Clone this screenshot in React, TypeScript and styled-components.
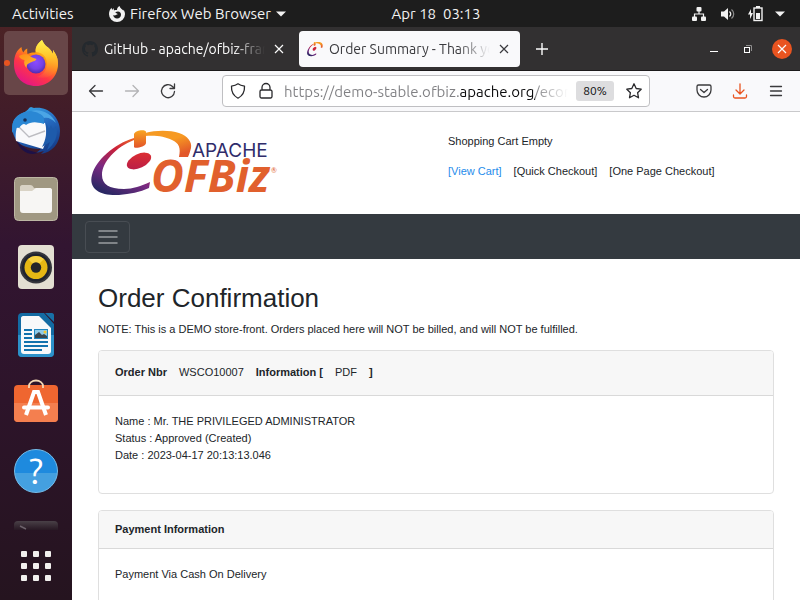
import React from "react";
import styled, { createGlobalStyle } from "styled-components";

const GlobalStyle = createGlobalStyle`
  * { box-sizing: border-box; }
  body { margin: 0; background: #fff; overflow: hidden; }
  button, input { font: inherit; color: inherit; }
  svg { display: block; flex: none; overflow: visible; }
`;

const UI_FONT = `Ubuntu, "Noto Sans", sans-serif`;
const PAGE_FONT = `"Liberation Sans", Arial, sans-serif`;

/* ---------- Desktop shell ---------- */

const Desktop = styled.div`
  display: flex;
  flex-direction: column;
  height: 100vh;
  font-family: ${UI_FONT};
  font-size: 15px;
`;

const TopBar = styled.header`
  display: grid;
  grid-template-columns: 72px 1fr auto 1fr;
  align-items: center;
  flex: none;
  height: 27px;
  line-height: 20px;
  background: #1d1d1d;
  color: #f2f2f2;
`;

const AppMenu = styled.div`
  padding-left: 37px;
`;

const StatusIcons = styled.div`
  display: flex;
  align-items: center;
  justify-content: flex-end;
  gap: 12px;
  padding-right: 15px;
`;

const BarButton = styled.button<{ $inset?: boolean }>`
  display: flex;
  align-items: center;
  gap: 5px;
  padding: 0 0 0 ${(p) => (p.$inset ? 12 : 0)}px;
  border: 0;
  background: none;
  white-space: pre;
`;

const Workspace = styled.div`
  display: flex;
  flex: 1;
  min-height: 0;
`;

const Dock = styled.nav`
  display: flex;
  flex-direction: column;
  flex: none;
  gap: 4px;
  width: 72px;
  padding: 4px;
  overflow: hidden;
  background: linear-gradient(180deg, #4b2225 0%, #3d1a2b 22%, #321531 38%, #2d142a 65%, #25141f 100%);
`;

const DockTile = styled.button<{ $active?: boolean; $partial?: boolean }>`
  position: relative;
  display: flex;
  justify-content: center;
  align-items: ${(p) => (p.$partial ? "flex-start" : "center")};
  flex: none;
  height: ${(p) => (p.$partial ? 23 : 64)}px;
  padding: ${(p) => (p.$partial ? "8px 0 0" : "0")};
  border: 0;
  border-radius: 5px;
  overflow: ${(p) => (p.$partial ? "hidden" : "visible")};
  background: ${(p) => (p.$active ? "#684648" : "none")};
`;

const RunningDot = styled.span`
  position: absolute;
  left: 0;
  top: 29px;
  width: 6px;
  height: 6px;
  border-radius: 50%;
  background: #e95420;
`;

/* ---------- Browser chrome ---------- */

const BrowserWindow = styled.section`
  display: flex;
  flex-direction: column;
  flex: 1;
  min-width: 0;
`;

const TabStrip = styled.div`
  display: flex;
  align-items: center;
  flex: none;
  height: 44px;
  padding: 0 8px 0 2px;
  background: #323031;
  border-bottom: 1px solid #1c1a1b;
  color: #fbfbfb;
  font-size: 14px;
`;

const Tab = styled.div<{ $active?: boolean }>`
  display: flex;
  align-items: center;
  gap: 6px;
  flex: 0 1 221px;
  min-width: 0;
  height: 36px;
  padding: 0 8px;
  border-radius: 4px;
  background: ${(p) => (p.$active ? "#f9f9fb" : "none")};
  color: ${(p) => (p.$active ? "#3a3a3e" : "#fbfbfb")};
  margin-right: 4px;
`;

const TabTitle = styled.span`
  flex: 1;
  min-width: 0;
  overflow: hidden;
  white-space: nowrap;
  mask-image: linear-gradient(to left, transparent 0, #000 32px);
`;

const IconButton = styled.button<{ $size?: number }>`
  display: flex;
  align-items: center;
  justify-content: center;
  flex: none;
  width: ${(p) => p.$size ?? 36}px;
  height: ${(p) => p.$size ?? 32}px;
  padding: 0;
  border: 0;
  background: none;
`;

const WindowControls = styled.div`
  display: flex;
  align-items: center;
  gap: 14px;
  margin-left: auto;
`;

const CloseWindow = styled(IconButton)`
  border-radius: 50%;
  background: #e95420;
`;

const Toolbar = styled.div`
  display: flex;
  align-items: center;
  flex: none;
  height: 41px;
  padding: 0 6px;
  background: #f9f9fb;
  border-bottom: 1px solid #c9c9cb;
  color: #3a3a3c;
`;

const AddressBar = styled.div`
  display: flex;
  align-items: center;
  gap: 12px;
  flex: 1;
  min-width: 0;
  height: 32px;
  margin: 0 36px;
  padding: 0 7px;
  background: #fff;
  border: 1px solid #bfbfc2;
  border-radius: 4px;
  color: #29292c;
`;

const UrlInput = styled.input`
  flex: 1;
  min-width: 0;
  margin-left: -2px;
  padding: 0;
  border: 0;
  outline: 0;
  color: transparent;
  background: linear-gradient(
    to right,
    #808083 0 176px,
    #0c0c0d 176px 251px,
    #808083 251px,
    transparent 284px
  );
  background-clip: text;
`;

const AddressEnd = styled.div`
  display: flex;
  align-items: center;
  gap: 12px;
  margin-left: -4px;
`;

const ZoomBadge = styled.button`
  width: 38px;
  height: 20px;
  padding: 0;
  border: 0;
  border-radius: 3px;
  background: #dddddf;
  color: #111;
  font-size: 12px;
  line-height: 20px;
`;

/* ---------- Store page ---------- */

const Page = styled.div`
  flex: 1;
  min-height: 0;
  overflow: hidden;
  background: #fff;
  color: #212529;
  font-family: ${PAGE_FONT};
  font-size: 11px;
  line-height: 17px;
`;

const SiteHeader = styled.header`
  display: grid;
  grid-template-columns: 1fr 1fr;
  height: 102px;
  padding-top: 18px;
`;

const LogoLink = styled.a`
  padding-left: 19px;
`;

const MiniCart = styled.div`
  padding: 3px 12px 0;
`;

const CartStatus = styled.p`
  margin: 0 0 13px;
`;

const CartLinks = styled.nav`
  display: flex;
  gap: 12px;
  white-space: nowrap;
`;

const PageLink = styled.a<{ $accent?: boolean }>`
  color: ${(p) => (p.$accent ? "#1f8ceb" : "inherit")};
  text-decoration: none;
`;

const NavBar = styled.nav`
  display: flex;
  align-items: center;
  height: 45px;
  padding: 0 13px;
  background: #343a40;
`;

const NavToggle = styled.button`
  display: flex;
  align-items: center;
  justify-content: center;
  width: 45px;
  height: 32px;
  padding: 0;
  border: 1px solid #484d53;
  border-radius: 4px;
  background: none;
  color: #999da0;
`;

const Main = styled.main`
  padding: 22px 26px;
`;

const Title = styled.h1`
  margin: 0 0 6px;
  font-size: 26px;
  line-height: 34px;
  font-weight: 400;
`;

const Note = styled.p`
  margin: 0 0 12px;
`;

const Card = styled.section`
  margin-bottom: 16px;
  border: 1px solid #dfdfdf;
  border-radius: 4px;
  overflow: hidden;
`;

const CardHeader = styled.h2<{ $tall?: boolean }>`
  display: flex;
  align-items: baseline;
  gap: 12px;
  margin: 0;
  padding: ${(p) => (p.$tall ? "13px 16px 14px" : "10px 16px")};
  background: #f7f7f7;
  border-bottom: 1px solid #d9d9d9;
  font-size: 11px;
  line-height: 17px;
  font-weight: 700;
`;

const HeaderLink = styled(PageLink)`
  font-weight: 400;
`;

const CardBody = styled.div`
  padding: 17px 16px 29px;
`;

const Line = styled.p`
  margin: 0;
`;

/* ---------- Icons ---------- */

const FirefoxIcon = () => (
  <svg width="48" height="48" viewBox="0 0 48 48" aria-hidden="true">
    <defs>
      <linearGradient id="fxBody" x1=".85" y1=".1" x2=".3" y2="1">
        <stop offset="0" stopColor="#fff44f" />
        <stop offset=".35" stopColor="#ff980e" />
        <stop offset=".65" stopColor="#ff3647" />
        <stop offset="1" stopColor="#e31587" />
      </linearGradient>
      <linearGradient id="fxTail" x1=".5" y1="0" x2=".5" y2="1">
        <stop offset="0" stopColor="#fff44f" />
        <stop offset=".45" stopColor="#ffc42a" />
        <stop offset="1" stopColor="#ff7139" stopOpacity=".2" />
      </linearGradient>
      <radialGradient id="fxGlobe" cx=".5" cy=".4" r=".6">
        <stop offset="0" stopColor="#8a4bff" />
        <stop offset=".6" stopColor="#7542e5" />
        <stop offset="1" stopColor="#4f2baf" />
      </radialGradient>
      <linearGradient id="fxHead" x1="0" y1="0" x2="1" y2="1">
        <stop offset="0" stopColor="#ff8a16" />
        <stop offset="1" stopColor="#ffbd2f" />
      </linearGradient>
    </defs>
    <path
      d="M30 1c-5 4-7 8-6.500 12.500-3-.3-6 .2-8 1.500-.4-2-.4-4-.2-5.500-2 1-3.300 2.500-4 4-1-1.500-1.700-3.500-1.800-5.500C5 11 2 16 2 25c0 13 9 22 22 22 13 0 22-10 22-22 0-7-3-11-5-14v4c-2-4-4-6-7-8-2-2-3-4-4-6z"
      fill="url(#fxBody)"
    />
    <path d="M30 1c-5 4-7 8-6 12 8 1 12 6 10.500 15-1 5-4.500 8-9.500 10 12 3 21-4 21-14 0-6-3-10-5-13v4c-2-4-4-6-7-8-2-2-3-4-4-6z" fill="url(#fxTail)" />
    <circle cx="24" cy="25" r="9.500" fill="url(#fxGlobe)" />
    <path d="M7 17c3-2 8-2.500 10-.5 2 1.500 4.500 2.500 7.500 3.500-1 2.500-4.500 2.500-6 3.500-2.500 1.500-4 1.500-4 5.500-2-2-3-5-2-8-3-.5-5-2-5.500-4z" fill="url(#fxHead)" />
  </svg>
);

const ThunderbirdIcon = () => (
  <svg width="48" height="48" viewBox="0 0 48 48" aria-hidden="true">
    <defs>
      <linearGradient id="tb" x1=".2" y1="0" x2=".7" y2="1">
        <stop offset="0" stopColor="#39a7e8" />
        <stop offset=".5" stopColor="#2467bd" />
        <stop offset="1" stopColor="#153a86" />
      </linearGradient>
    </defs>
    <path
      d="M17 1l2-1 3 1c14-2 26 9 26 23 0 13-8 21-19 23l3-3-8 2 5-4C18 42 8 39 4 33 0 26-1 18 2 13c3-5 7-6 11-8 2-2 4-3 4-4z"
      fill="url(#tb)"
    />
    <path d="M4 33c3 4 7 7 12 10l10 3-5 1C13 47 7 41 4 33z" fill="#1d1147" />
    <path d="M7 15c3-2 20 0 26 1 2 6 2 18-2 26L4 34c-1-6 0-14 3-19z" fill="#f9f9fb" />
    <path d="M6 19l11 11 16-6" fill="none" stroke="#bcbcc1" strokeWidth="1.400" />
    <path d="M2 13c4-6 10-9 18-9 9 0 13 5 12 13-6-2-13-3-18 1-2-2-4-1-7 3-2-1-5 1-7 5 0-5 0-9 2-13z" fill="#2a87d4" />
    <path d="M19 4c9-3 21 2 25 12-4-4-8-6-12-5-2-4-7-6-13-7z" fill="#4ba5e5" />
    <path d="M34 16c1 9 0 17-4 24l8-5-3 8c7-5 12-14 9-24l-3 4-2-5-2 4z" fill="#1e5bab" />
    <circle cx="13" cy="13" r="1.800" fill="#173058" />
  </svg>
);

const FilesIcon = () => (
  <svg width="48" height="48" viewBox="0 0 48 48" aria-hidden="true">
    <rect x="2.500" y="2.500" width="43" height="43" rx="4" fill="#a09882" stroke="#bdb7a4" />
    <path d="M8 24V12c0-1 1-2 2-2h8c2 0 3 1 4 3h16c1 0 2 1 2 2v9z" fill="#d9d3c5" />
    <path d="M8 16h12l4-3h14c1 0 2 1 2 2v20c0 2-1 3-3 3H11c-2 0-3-1-3-3z" fill="#f7f6f4" />
  </svg>
);

const RhythmboxIcon = () => (
  <svg width="48" height="48" viewBox="0 0 48 48" aria-hidden="true">
    <rect x="6" y="2" width="36" height="44" rx="4" fill="#e3dfd2" />
    <circle cx="24" cy="24.500" r="16" fill="#35363c" />
    <circle cx="24" cy="24.500" r="14" fill="#20242e" />
    <circle cx="24" cy="24.500" r="11.500" fill="#e5b714" />
    <path d="M24 13a11.500 11.500 0 018 3l-8 8-8-8a11.500 11.500 0 018-3z" fill="#f7d343" />
    <circle cx="24" cy="24.500" r="5.200" fill="#24262a" />
  </svg>
);

const WriterIcon = () => (
  <svg width="48" height="48" viewBox="0 0 48 48" aria-hidden="true">
    <path d="M10 2h22l10 11v29a4 4 0 01-4 4H10a4 4 0 01-4-4V6a4 4 0 014-4z" fill="#136ba3" />
    <path d="M6 24h36v18a4 4 0 01-4 4H10a4 4 0 01-4-4z" fill="#2c91c9" />
    <path d="M11 5h16l12 12v23c0 2-1 3-3 3H12c-2 0-3-1-3-3V7c0-1 1-2 2-2z" fill="#f8f9fa" />
    <path d="M33 2h7c1 0 2 1 2 2v7z" fill="#1870a7" />
    <path d="M12 19h8M12 23h8M12 27h8M12 31h24M12 35h24M12 39h18" stroke="#1272ad" strokeWidth="2" />
    <rect x="22" y="18" width="14" height="10" fill="#2086bf" />
    <rect x="23" y="19" width="12" height="8" fill="#8fcbe9" />
    <path d="M23 27v-3l4-3 3 3 2-1 3 2v2z" fill="#38464f" />
    <circle cx="33" cy="21" r="1.500" fill="#f3c62e" />
  </svg>
);

const SoftwareIcon = () => (
  <svg width="48" height="48" viewBox="0 0 48 48" aria-hidden="true">
    <rect x="2" y="6" width="44" height="37" rx="4" fill="#ef6630" />
    <path d="M2 24h44v15a4 4 0 01-4 4H6a4 4 0 01-4-4z" fill="#f47f4f" />
    <path d="M17 9V7a7 5.500 0 0114 0v2" fill="none" stroke="#f4d9b5" strokeWidth="1.800" />
    <path d="M14 36l8-23h4l8 23" fill="none" stroke="#fff" strokeWidth="4" />
    <path d="M12 28.500h24" stroke="#fff" strokeWidth="4" strokeLinecap="round" />
  </svg>
);

const HelpMark = styled.span`
  display: flex;
  align-items: center;
  justify-content: center;
  width: 44px;
  height: 44px;
  border-radius: 50%;
  border: 1px solid #74bdeb;
  background: linear-gradient(180deg, #1e8ade 0 55%, #44a0e0 55%);
  color: #fff;
  font-size: 36px;
  line-height: 44px;
`;

const TerminalIcon = () => (
  <svg width="48" height="48" viewBox="0 0 48 48" aria-hidden="true">
    <defs>
      <linearGradient id="term" x1="0" y1="0" x2="0" y2="1">
        <stop offset="0" stopColor="#494047" />
        <stop offset=".22" stopColor="#2a1b26" />
      </linearGradient>
    </defs>
    <rect x="2" y="6" width="44" height="38" rx="4" fill="url(#term)" />
    <path d="M8 11l6 3" stroke="#6d626b" strokeWidth="1.500" />
  </svg>
);

const AppGridIcon = () => (
  <svg width="30" height="30" viewBox="0 0 30 30" fill="#f2f0ee" aria-hidden="true">
    {[0, 12, 24].map((y) =>
      [0, 12, 24].map((x) => <rect key={`${x}-${y}`} x={x} y={y} width="6" height="6" rx="1" />)
    )}
  </svg>
);

const FirefoxMono = () => (
  <svg width="16" height="16" viewBox="0 0 16 16" aria-hidden="true">
    <path
      fill="#f2f2f2"
      fillRule="evenodd"
      d="M10.500 0C8.800 1 8 2.300 8 4 6.800 3.900 5.800 4 5 4.500 4.800 3.800 4.700 3 4.800 2.300 4 2.700 3.500 3.300 3.200 3.900 2.800 3.300 2.600 2.500 2.600 1.800 1 3.300 0 5.500 0 8.300A8 7.700 0 0016 8.300c0-2-.7-3.500-1.500-4.500v1C13.500 3 11 2.500 10.500 0zM9 5.500c2 .2 3 1.500 3 3.300A3.700 3.700 0 018 12.500c-2 0-3.700-1.400-3.700-3.500 1 .6 2 .5 2.700 0 .5-.4 1.300-.3 1.700-1-.7-.6-1.700-.8-2.500-1.500.8-.5 1.800-.9 2.800-1z"
    />
  </svg>
);

const Caret = () => (
  <svg width="10" height="6" viewBox="0 0 10 6" fill="#f2f2f2" aria-hidden="true">
    <path d="M0 .5h10L5 5.500z" />
  </svg>
);

const NetworkIcon = () => (
  <svg width="16" height="16" viewBox="0 0 16 16" fill="#f2f2f2" aria-hidden="true">
    <rect x="5.500" y="1" width="5" height="4.500" rx="1" />
    <rect x="1" y="10.500" width="5" height="4.500" rx="1" />
    <rect x="10" y="10.500" width="5" height="4.500" rx="1" />
    <path d="M8 5v3M3.500 11V8h9v3" fill="none" stroke="#f2f2f2" strokeWidth="1.200" />
  </svg>
);

const VolumeIcon = () => (
  <svg width="16" height="16" viewBox="0 0 16 16" aria-hidden="true">
    <path d="M2 5.500h3L9 2v12l-4-3.500H2z" fill="#f2f2f2" />
    <path d="M10.500 5.500c1.500 1.500 1.500 3.500 0 5" fill="none" stroke="#f2f2f2" strokeWidth="1.200" />
    <path d="M12.500 3.500c3 2.500 3 6.500 0 9" fill="none" stroke="#8c8c8c" strokeWidth="1.200" />
  </svg>
);

const BatteryIcon = () => (
  <svg width="16" height="16" viewBox="0 0 16 16" fill="#f2f2f2" aria-hidden="true">
    <path d="M4 3L1 8.500h2V13l3-6H4z" />
    <path d="M9 0h4v2H9z" />
    <rect x="7" y="2" width="8" height="12.500" fill="none" stroke="#f2f2f2" strokeWidth="1.400" />
    <rect x="9" y="7" width="4" height="6" />
  </svg>
);

const GitHubIcon = () => (
  <svg width="16" height="16" viewBox="0 0 16 16" fill="#24292e" aria-hidden="true">
    <path d="M8 0C3.580 0 0 3.580 0 8c0 3.540 2.290 6.530 5.470 7.590.4.070.55-.17.55-.38 0-.19-.01-.82-.01-1.490-2.010.37-2.530-.49-2.690-.94-.09-.23-.48-.94-.82-1.130-.28-.15-.68-.52-.01-.53.63-.01 1.080.58 1.230.82.72 1.210 1.870.87 2.330.66.07-.52.28-.87.51-1.070-1.780-.2-3.640-.89-3.640-3.950 0-.87.31-1.590.82-2.150-.08-.2-.36-1.020.08-2.120 0 0 .67-.21 2.200.82.64-.18 1.320-.27 2-.27s1.360.09 2 .27c1.530-1.040 2.200-.82 2.200-.82.44 1.100.16 1.920.08 2.120.51.56.82 1.270.82 2.150 0 3.070-1.870 3.750-3.650 3.950.29.25.54.73.54 1.480 0 1.070-.01 1.930-.01 2.200 0 .21.150.46.55.38A8.010 8.010 0 0016 8c0-4.420-3.580-8-8-8z" />
  </svg>
);

const Swoosh = ({ id }: { id: string }) => (
  <g>
    <defs>
      <linearGradient id={`${id}-l`} x1=".8" y1="0" x2=".35" y2="1">
        <stop offset="0" stopColor="#f0702a" />
        <stop offset=".3" stopColor="#cb2039" />
        <stop offset=".65" stopColor="#7a2a82" />
        <stop offset="1" stopColor="#2b2864" />
      </linearGradient>
      <linearGradient id={`${id}-r`} x1="0" y1="0" x2=".6" y2="1">
        <stop offset="0" stopColor="#f59a23" />
        <stop offset=".5" stopColor="#f79a22" />
        <stop offset="1" stopColor="#e2572a" />
      </linearGradient>
      <linearGradient id={`${id}-t`} x1="0" y1="0" x2="0" y2="1">
        <stop offset="0" stopColor="#f9a61f" />
        <stop offset="1" stopColor="#e25329" />
      </linearGradient>
      <linearGradient id={`${id}-d`} x1="1" y1="0" x2="0" y2="1">
        <stop offset="0" stopColor="#e2322e" />
        <stop offset="1" stopColor="#b41a4b" />
      </linearGradient>
    </defs>
    <path d="M43 8C23 14 5 30 1 45c-4 15 10 21 27 20 11-1 21-3 30-7l1-6c-9 4-17 7-26 7-15 0-22-5-22-14 0-13 14-28 32-35z" fill={`url(#${id}-l)`} />
    <path d="M54 3c11-3 25-3 34 0 9 3 13 9 12 15-1 4-2 7-3 9h-9c2-9 0-14-7-17-7-4-18-5-27-4z" fill={`url(#${id}-r)`} />
    <path d="M43 4c1-4 12-5 12-2v11c0 4-12 6-12 4z" fill={`url(#${id}-t)`} />
    <ellipse cx="48" cy="31" rx="13" ry="7" transform="rotate(-25 48 31)" fill={`url(#${id}-d)`} />
  </g>
);

const OfbizFavicon = () => (
  <svg width="16" height="16" viewBox="0 0 102 102" aria-hidden="true">
    <g transform="translate(0 6) scale(1 1.400)">
      <Swoosh id="fav" />
    </g>
  </svg>
);

const OfbizLogo = () => (
  <svg width="190" height="68" viewBox="0 0 190 68" role="img" aria-label="Apache OFBiz">
    <Swoosh id="logo" />
    <text x="101" y="27" fontFamily="Inter" fontSize="19" fill="#2f2c6b">
      APACHE
    </text>
    <text x="60" y="62" fontFamily="Open Sans" fontSize="45" fontWeight="700" fontStyle="italic" fill="#e1602d">
      OFBiz
    </text>
    <text x="180" y="43" fontFamily="Lato" fontSize="7" fill="#e1602d">
      ®
    </text>
  </svg>
);

const CloseIcon = ({ size = 12 }: { size?: number }) => (
  <svg width={size} height={size} viewBox="0 0 12 12" stroke="currentColor" strokeWidth="1.200" aria-hidden="true">
    <path d="M2 2l8 8M10 2l-8 8" />
  </svg>
);

const PlusIcon = () => (
  <svg width="12" height="12" viewBox="0 0 12 12" stroke="currentColor" strokeWidth="1.400" aria-hidden="true">
    <path d="M6 0v12M0 6h12" />
  </svg>
);

const StrokeIcon = ({ d, color = "currentColor" }: { d: string; color?: string }) => (
  <svg
    width="16"
    height="16"
    viewBox="0 0 16 16"
    fill="none"
    stroke={color}
    strokeWidth="1.300"
    strokeLinecap="round"
    strokeLinejoin="round"
    aria-hidden="true"
  >
    <path d={d} />
  </svg>
);

const ICONS = {
  back: "M14.500 8H1.500M7 2.500L1.500 8 7 13.500",
  forward: "M1.500 8h13M9 2.500L14.500 8 9 13.500",
  reload: "M14.500 8.500a6.500 6.500 0 11-2-5L14.500 5.500M14.500 1v4.500H10",
  shield: "M8 .8c2 1.500 4 2 6.500 2.300.3 5-1.500 9.400-6.500 12.100C3 12.500 1.200 8.100 1.500 3.100 4 2.800 6 2.300 8 .8z",
  lock: "M4 7V4.500a4 4 0 018 0V7M3.500 7h9a1.500 1.500 0 011.500 1.500v5a1.500 1.500 0 01-1.500 1.500h-9A1.500 1.500 0 012 13.500v-5A1.500 1.500 0 013.500 7z",
  star: "M8 .8l2.200 4.700 5 .7-3.600 3.500.9 5.100L8 12.300l-4.500 2.500.9-5.100L.8 6.200l5-.7z",
  pocket: "M2.500 2h11A1.500 1.500 0 0115 3.500V7A7 7 0 011 7V3.500A1.500 1.500 0 012.500 2zM4.500 6.500L8 9.500l3.500-3",
  download: "M8 .8v10M4 7l4 4 4-4M1.500 12v1.500A1.500 1.500 0 003 15h10a1.500 1.500 0 001.500-1.500V12",
  menu: "M2.500 3.500h11M2.500 8h11M2.500 12.500h11",
};

const NavToggleIcon = () => (
  <svg width="20" height="16" viewBox="0 0 20 16" stroke="currentColor" strokeWidth="1.500" strokeLinecap="round" aria-hidden="true">
    <path d="M1 2h18M1 8h18M1 14h18" />
  </svg>
);

const MinimizeIcon = () => (
  <svg width="8" height="8" viewBox="0 0 8 8" fill="#fff" aria-hidden="true">
    <rect y="6" width="8" height="1" />
  </svg>
);

const RestoreIcon = () => (
  <svg width="8" height="8" viewBox="0 0 8 8" fill="none" aria-hidden="true">
    <path d="M2 .5h5.500V6" stroke="#8f8e8e" />
    <rect x=".5" y="2.500" width="5" height="5" stroke="#fff" />
  </svg>
);

/* ---------- App ---------- */

const dockApps = [
  { label: "Firefox Web Browser", icon: <FirefoxIcon />, active: true },
  { label: "Thunderbird Mail", icon: <ThunderbirdIcon /> },
  { label: "Files", icon: <FilesIcon /> },
  { label: "Rhythmbox", icon: <RhythmboxIcon /> },
  { label: "LibreOffice Writer", icon: <WriterIcon /> },
  { label: "Ubuntu Software", icon: <SoftwareIcon /> },
  { label: "Help", icon: <HelpMark>?</HelpMark> },
  { label: "Terminal", icon: <TerminalIcon />, partial: true },
  { label: "Show Applications", icon: <AppGridIcon /> },
];

export default function App() {
  return (
    <>
      <GlobalStyle />
      <Desktop>
        <TopBar>
          <BarButton $inset>Activities</BarButton>
          <AppMenu>
            <BarButton>
              <FirefoxMono />
              Firefox Web Browser
              <Caret />
            </BarButton>
          </AppMenu>
          <BarButton>Apr 18  03:13</BarButton>
          <StatusIcons>
            <NetworkIcon />
            <VolumeIcon />
            <BatteryIcon />
            <Caret />
          </StatusIcons>
        </TopBar>
        <Workspace>
          <Dock aria-label="Dock">
            {dockApps.map((app) => (
              <DockTile key={app.label} aria-label={app.label} $active={app.active} $partial={app.partial}>
                {app.active && <RunningDot />}
                {app.icon}
              </DockTile>
            ))}
          </Dock>
          <BrowserWindow>
            <TabStrip>
              <Tab>
                <GitHubIcon />
                <TabTitle>GitHub - apache/ofbiz-framework</TabTitle>
                <IconButton $size={16} aria-label="Close GitHub tab">
                  <CloseIcon />
                </IconButton>
              </Tab>
              <Tab $active>
                <OfbizFavicon />
                <TabTitle>Order Summary - Thank you</TabTitle>
                <IconButton $size={16} aria-label="Close Order Summary tab">
                  <CloseIcon />
                </IconButton>
              </Tab>
              <IconButton aria-label="New tab">
                <PlusIcon />
              </IconButton>
              <WindowControls>
                <IconButton $size={20} aria-label="Minimize">
                  <MinimizeIcon />
                </IconButton>
                <IconButton $size={20} aria-label="Restore">
                  <RestoreIcon />
                </IconButton>
                <CloseWindow $size={20} aria-label="Close window">
                  <CloseIcon />
                </CloseWindow>
              </WindowControls>
            </TabStrip>
            <Toolbar>
              <IconButton aria-label="Back">
                <StrokeIcon d={ICONS.back} />
              </IconButton>
              <IconButton aria-label="Forward" disabled>
                <StrokeIcon d={ICONS.forward} color="#b4b4b6" />
              </IconButton>
              <IconButton aria-label="Reload">
                <StrokeIcon d={ICONS.reload} />
              </IconButton>
              <AddressBar>
                <StrokeIcon d={ICONS.shield} />
                <StrokeIcon d={ICONS.lock} />
                <UrlInput aria-label="Address" defaultValue="https://demo-stable.ofbiz.apache.org/ecommerce" />
                <AddressEnd>
                  <ZoomBadge>80%</ZoomBadge>
                  <StrokeIcon d={ICONS.star} />
                </AddressEnd>
              </AddressBar>
              <IconButton aria-label="Save to Pocket">
                <StrokeIcon d={ICONS.pocket} />
              </IconButton>
              <IconButton aria-label="Downloads">
                <StrokeIcon d={ICONS.download} color="#e95420" />
              </IconButton>
              <IconButton aria-label="Menu">
                <StrokeIcon d={ICONS.menu} />
              </IconButton>
            </Toolbar>
            <Page>
              <SiteHeader>
                <LogoLink href="#home">
                  <OfbizLogo />
                </LogoLink>
                <MiniCart>
                  <CartStatus>Shopping Cart Empty</CartStatus>
                  <CartLinks aria-label="Cart">
                    <PageLink $accent href="#cart">[View Cart]</PageLink>
                    <PageLink href="#quick">[Quick Checkout]</PageLink>
                    <PageLink href="#onepage">[One Page Checkout]</PageLink>
                  </CartLinks>
                </MiniCart>
              </SiteHeader>
              <NavBar aria-label="Store">
                <NavToggle aria-label="Toggle navigation">
                  <NavToggleIcon />
                </NavToggle>
              </NavBar>
              <Main>
                <Title>Order Confirmation</Title>
                <Note>NOTE: This is a DEMO store-front. Orders placed here will NOT be billed, and will NOT be fulfilled.</Note>
                <Card>
                  <CardHeader $tall>
                    <span>Order Nbr</span>
                    <HeaderLink href="#order">WSCO10007</HeaderLink>
                    <span>Information [</span>
                    <HeaderLink href="#pdf">PDF</HeaderLink>
                    <span>]</span>
                  </CardHeader>
                  <CardBody>
                    <Line>Name : Mr. THE PRIVILEGED ADMINISTRATOR</Line>
                    <Line>Status : Approved (Created)</Line>
                    <Line>Date : 2023-04-17 20:13:13.046</Line>
                  </CardBody>
                </Card>
                <Card>
                  <CardHeader>Payment Information</CardHeader>
                  <CardBody>
                    <Line>Payment Via Cash On Delivery</Line>
                  </CardBody>
                </Card>
              </Main>
            </Page>
          </BrowserWindow>
        </Workspace>
      </Desktop>
    </>
  );
}
